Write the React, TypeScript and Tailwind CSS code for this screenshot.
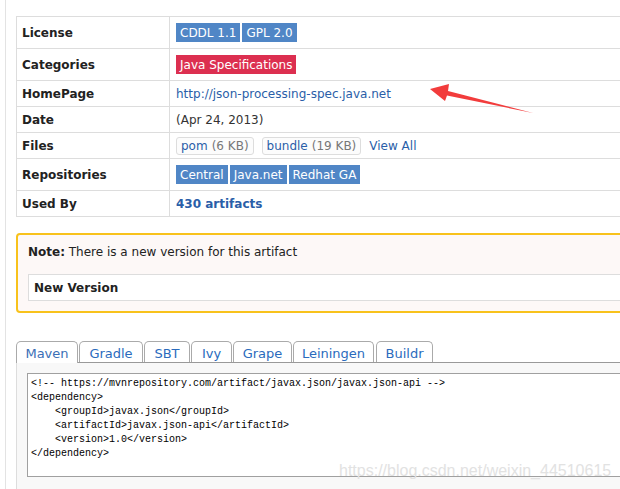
import React from "react";

const rows = [
	{ label: "License", h: "h-[32px]" },
	{ label: "Categories", h: "h-[32px]" },
	{ label: "HomePage", h: "h-[26px]" },
	{ label: "Date", h: "h-[26px]" },
	{ label: "Files", h: "h-[26px]" },
	{ label: "Repositories", h: "h-[32px]" },
	{ label: "Used By", h: "h-[26px]" },
];

function Badge({ children, red }: { children: React.ReactNode; red?: boolean }) {
	return (
		<span
			className={
				"inline-flex h-[19px] items-center px-[4px] text-white " +
				(red ? "bg-[#dc2f50]" : "bg-[#5086c6]")
			}
		>
			{children}
		</span>
	);
}

function FileBox({ name, size }: { name: string; size: string }) {
	return (
		<span className="inline-flex h-[18px] items-center rounded-[3px] border border-[#ddd] bg-[#fcfcfc] px-[4px]">
			<span className="text-[#2a5ea8]">{name}</span>
			<span className="ml-[4px] text-[#777]">{size}</span>
		</span>
	);
}

function Value({ i }: { i: number }) {
	switch (i) {
		case 0:
			return (
				<div className="flex gap-[2px]">
					<Badge>CDDL 1.1</Badge>
					<Badge>GPL 2.0</Badge>
				</div>
			);
		case 1:
			return <Badge red>Java Specifications</Badge>;
		case 2:
			return <span className="text-[#2a5ea8]">http://json-processing-spec.java.net</span>;
		case 3:
			return <span className="text-[#333]">(Apr 24, 2013)</span>;
		case 4:
			return (
				<div className="flex items-center gap-[8px]">
					<FileBox name="pom" size="(6 KB)" />
					<FileBox name="bundle" size="(19 KB)" />
					<span className="text-[#2a5ea8]">View All</span>
				</div>
			);
		case 5:
			return (
				<div className="flex gap-[2px]">
					<Badge>Central</Badge>
					<Badge>Java.net</Badge>
					<Badge>Redhat GA</Badge>
				</div>
			);
		default:
			return <span className="font-bold text-[#2a5ea8]">430 artifacts</span>;
	}
}

const tabs = [
	{ name: "Maven", w: "w-[62px]" },
	{ name: "Gradle", w: "w-[64px]" },
	{ name: "SBT", w: "w-[46px]" },
	{ name: "Ivy", w: "w-[41px]" },
	{ name: "Grape", w: "w-[59px]" },
	{ name: "Leiningen", w: "w-[81px]" },
	{ name: "Buildr", w: "w-[57px]" },
];

const code = `<!-- https://mvnrepository.com/artifact/javax.json/javax.json-api -->
<dependency>
    <groupId>javax.json</groupId>
    <artifactId>javax.json-api</artifactId>
    <version>1.0</version>
</dependency>`;

export default function App() {
	return (
		<div className="relative h-[489px] w-[620px] overflow-hidden bg-white font-['DejaVu_Sans',sans-serif] text-[12px] text-[#222]">
			<div className="ml-[5px] h-full border-l border-[#e3e3e3] pl-[10px] pt-[16px]">
				{/* info table */}
				<div className="w-[640px] border-t border-l border-[#ddd]">
					{rows.map((r, i) => (
						<div key={r.label} className={"flex border-b border-[#ddd] " + r.h}>
							<div className="flex w-[153px] items-center border-r border-[#ddd] pl-[5px] font-bold">
								{r.label}
							</div>
							<div className="flex flex-1 items-center pl-[6px]">
								<Value i={i} />
							</div>
						</div>
					))}
				</div>

				{/* note */}
				<div className="mt-[16px] w-[640px] rounded-[4px] border-2 border-[#f8c21c] bg-[#fdf8f7] px-[10px] pt-[8px] pb-[10px]">
					<div className="h-[18px] leading-[18px] text-[#222]">
						<b>Note:</b> There is a new version for this artifact
					</div>
					<div className="mt-[13px] flex h-[27px] items-center border border-[#ddd] bg-white pl-[5px] font-bold">
						New Version
					</div>
				</div>

				{/* tabs */}
				<div className="mt-[28px] flex h-[22px] items-end gap-[1px] border-b border-[#999] text-[13px]">
					{tabs.map((t, i) => (
						<div
							key={t.name}
							className={
								"flex h-[21px] items-center justify-center rounded-t-[5px] border border-b-0 border-[#aaa] bg-white pt-[3px] " +
								t.w +
								(i === 0 ? " -mb-px h-[22px] text-[#3b6fb6]" : " text-[#2a6bbd]") +
								(i === 6 ? " ml-[1px]" : "")
							}
						>
							{t.name}
						</div>
					))}
				</div>
				<div className="h-[200px] w-[640px] border-l border-[#ddd] bg-[#f8f8f8] pt-[10px] pl-[10px]">
					<pre className="h-[104px] border border-[#a0a0a0] bg-white px-[3px] pt-[3px] font-['Liberation_Mono',monospace] text-[10px] leading-[14px] text-black">
						{code}
					</pre>
				</div>
			</div>

			{/* watermark */}
			<div className="absolute top-[459px] left-[339px] font-['Liberation_Sans',sans-serif] text-[16px] text-[#e2e2e2]">
				https://blog.csdn.net/weixin_44510615
			</div>

			{/* annotation arrow */}
			<svg className="absolute top-0 left-0" width="620" height="489">
				<polygon
					points="430,89 449,84 448,91 533,113 447,95.5 445,101"
					fill="#f23c3c"
				/>
			</svg>
		</div>
	);
}
